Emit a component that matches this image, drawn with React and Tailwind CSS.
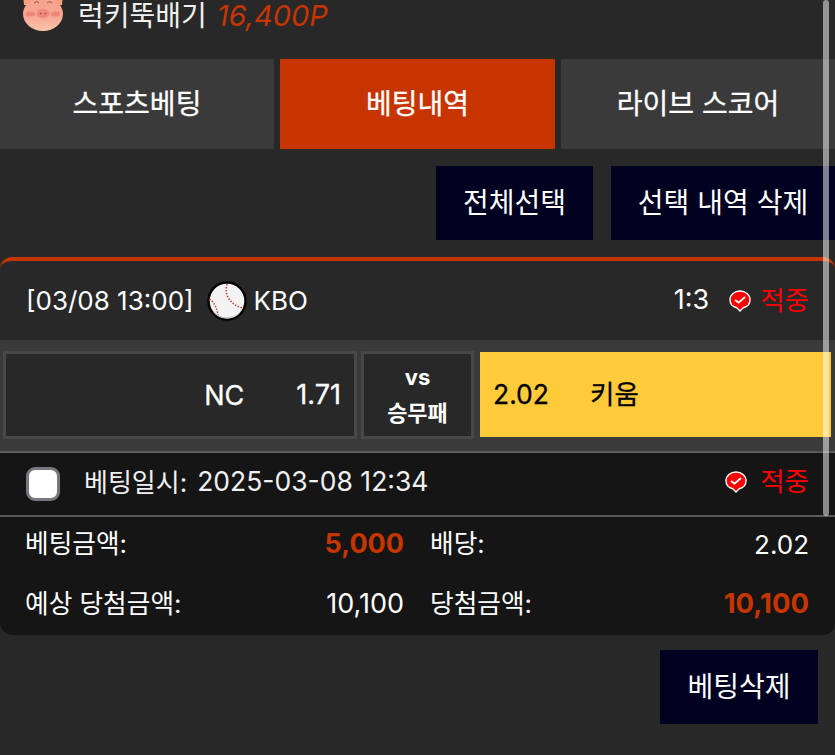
const font = { fontFamily: '"Inter", "Noto Sans CJK KR", sans-serif' };

function Pig() {
  return (
    <svg width="42" height="42" viewBox="0 0 42 42" className="shrink-0">
      <defs>
        <linearGradient id="pigFace" x1="0" y1="0" x2="0" y2="1">
          <stop offset="0" stopColor="#f9a58c" />
          <stop offset="0.55" stopColor="#f7a592" />
          <stop offset="1" stopColor="#fcc5ad" />
        </linearGradient>
      </defs>
      <path d="M1 0 L10 0 L10 10 L2 10 Z" fill="#f6a07f" />
      <path d="M41 0 L32 0 L32 10 L40 10 Z" fill="#f6a07f" />
      <ellipse cx="21" cy="19" rx="20" ry="17" fill="url(#pigFace)" />
      <path d="M12 8 q3 -3 5 0 M25 8 q3 -3 5 0" stroke="#8a5a4a" strokeWidth="1" fill="none" />
      <ellipse cx="8.5" cy="19" rx="4.5" ry="2.4" fill="#ef8478" />
      <ellipse cx="33.5" cy="19" rx="4.5" ry="2.4" fill="#ef8478" />
      <ellipse cx="21" cy="18.5" rx="6.5" ry="4.6" fill="#f0897e" />
      <circle cx="18.6" cy="18.5" r="1" fill="#a8504a" />
      <circle cx="23.4" cy="18.5" r="1" fill="#a8504a" />
    </svg>
  );
}

function Baseball() {
  return (
    <svg width="40" height="40" viewBox="0 0 40 40" className="shrink-0">
      <circle cx="20" cy="20" r="18.5" fill="#f4f4f4" stroke="#000" strokeWidth="2.4" />
      <path d="M6 31 A18 18 0 0 0 34 31 A22 22 0 0 1 6 31 Z" fill="#c9c9c9" />
      <path d="M20 3 C17 14 23 24 36 27" stroke="#c8453f" strokeWidth="1.6" strokeDasharray="1.5 1.5" fill="none" />
      <path d="M2.5 18 C7 21 10 27 11 34" stroke="#c8453f" strokeWidth="1.6" strokeDasharray="1.5 1.5" fill="none" />
    </svg>
  );
}

function HitBadge() {
  return (
    <svg width="22" height="22" viewBox="0 0 22 22" className="shrink-0">
      <path d="M11 1 C16.5 1 21 4.8 21 9.8 C21 14 18 17 14.2 17.8 L11 21 L7.8 17.8 C4 17 1 14 1 9.8 C1 4.8 5.5 1 11 1 Z" fill="#ff0000" stroke="#fff" strokeWidth="1.4" />
      <path d="M6 10 L9.6 12.6 L16 7" stroke="#fff" strokeWidth="1.8" fill="none" />
    </svg>
  );
}

function NavyButton({ className, children }) {
  return (
    <button className={`h-[74px] bg-[#000020] text-[28px] text-white flex items-center justify-center ${className}`}>
      {children}
    </button>
  );
}

export default function App() {
  return (
    <div className="relative w-[835px] h-[755px] overflow-hidden bg-[#282828] text-white" style={font}>
      {/* Header */}
      <header className="h-[59px] flex items-start pl-[22px]">
        <div className="-mt-[5px]">
          <Pig />
        </div>
        <div className="ml-[14px] flex items-center gap-[10px] h-[32px]">
          <span className="text-[28px] leading-[32px] text-[#f0f0f0]">럭키뚝배기</span>
          <span className="text-[29px] leading-[32px] italic pr-[2px] text-[#c63500]">16,400P</span>
        </div>
      </header>

      {/* Tabs */}
      <nav className="h-[90px] flex gap-[6px]">
        <div className="w-[274px] bg-[#3a3a3a] flex items-center justify-center text-[28px] [-webkit-text-stroke:0.3px_white]">스포츠베팅</div>
        <div className="w-[275px] bg-[#c63500] flex items-center justify-center text-[28px] [-webkit-text-stroke:0.3px_white]">베팅내역</div>
        <div className="flex-1 bg-[#3a3a3a] flex items-center justify-center text-[28px] [-webkit-text-stroke:0.3px_white]">라이브 스코어</div>
      </nav>

      {/* Actions */}
      <div className="mt-[17px] flex justify-end gap-[18px]">
        <NavyButton className="w-[157px]">전체선택</NavyButton>
        <NavyButton className="w-[224px]">선택 내역 삭제</NavyButton>
      </div>

      {/* Bet card */}
      <section className="mt-[17px] rounded-[12px] border-t-[4px] border-[#c63500] bg-[#282828] overflow-hidden">
        <div className="h-[79px] flex items-center pl-[26px] pr-[26px] text-[26px]">
          <span>[03/08 13:00]</span>
          <span className="ml-[13px]"><Baseball /></span>
          <span className="ml-[7px]">KBO</span>
          <span className="ml-auto text-[27px]">1:3</span>
          <span className="ml-[20px]"><HitBadge /></span>
          <span className="ml-[9px] text-[26.5px] text-[#ff0000]">적중</span>
        </div>

        <div className="h-[111px] bg-[#3a3a3a] flex gap-[4px] pl-[3px] pr-[4px] pt-[11px] pb-[12px]">
          <div className="w-[354px] border-[3px] border-[#484848] bg-[#282828] flex items-center justify-end pr-[13px] text-[27px] [-webkit-text-stroke:0.3px_white]">
            <span className="mr-[52px] mt-[3px]">NC</span>
            <span>1.71</span>
          </div>
          <div className="w-[113px] border-[3px] border-[#484848] bg-[#282828] flex flex-col items-center justify-center text-[22px] font-bold leading-[36px]">
            <span>vs</span>
            <span>승무패</span>
          </div>
          <div className="flex-1 ml-[2px] mt-[1px] mb-[2px] bg-[#ffcb3b] flex items-center pl-[13px] text-[26.5px] text-black [-webkit-text-stroke:0.3px_black]">
            <span>2.02</span>
            <span className="ml-[41px]">키움</span>
          </div>
        </div>

        <div className="h-[66px] bg-[#151515] border-y-[2px] border-[#5a5a5a] flex items-center pl-[26px] pr-[26px] text-[26.5px] text-[#f0f0f0]">
          <span className="w-[34px] h-[34px] rounded-[9px] bg-white border-[3px] border-[#77777f]"></span>
          <span className="ml-[24px] mb-[4px] text-[26px]">베팅일시:</span>
          <span className="ml-[10px] mb-[4px]">2025-03-08 12:34</span>
          <span className="ml-auto mb-[4px]"><HitBadge /></span>
          <span className="ml-[13px] mb-[4px] text-[#ff0000]">적중</span>
        </div>

        <div className="h-[118px] bg-[#151515] rounded-b-[12px] grid grid-cols-2 grid-rows-[54px_66px] gap-x-[26px] pl-[25px] pr-[26px] text-[25.7px]">
          <div className="flex items-center justify-between">
            <span>베팅금액:</span>
            <span className="text-[27px] font-bold text-[#c63500]">5,000</span>
          </div>
          <div className="flex items-center justify-between">
            <span>배당:</span>
            <span className="text-[26px]">2.02</span>
          </div>
          <div className="flex items-center justify-between">
            <span>예상 당첨금액:</span>
            <span className="text-[27px]">10,100</span>
          </div>
          <div className="flex items-center justify-between">
            <span>당첨금액:</span>
            <span className="text-[27.5px] font-bold text-[#c63500]">10,100</span>
          </div>
        </div>
      </section>

      <div className="mt-[15px] flex justify-end pr-[17px]">
        <NavyButton className="w-[158px]">베팅삭제</NavyButton>
      </div>

      {/* Overlay scrollbar */}
      <div className="absolute top-0 left-[823px] w-[6px] h-[516px] rounded-full bg-white/50"></div>
    </div>
  );
}
